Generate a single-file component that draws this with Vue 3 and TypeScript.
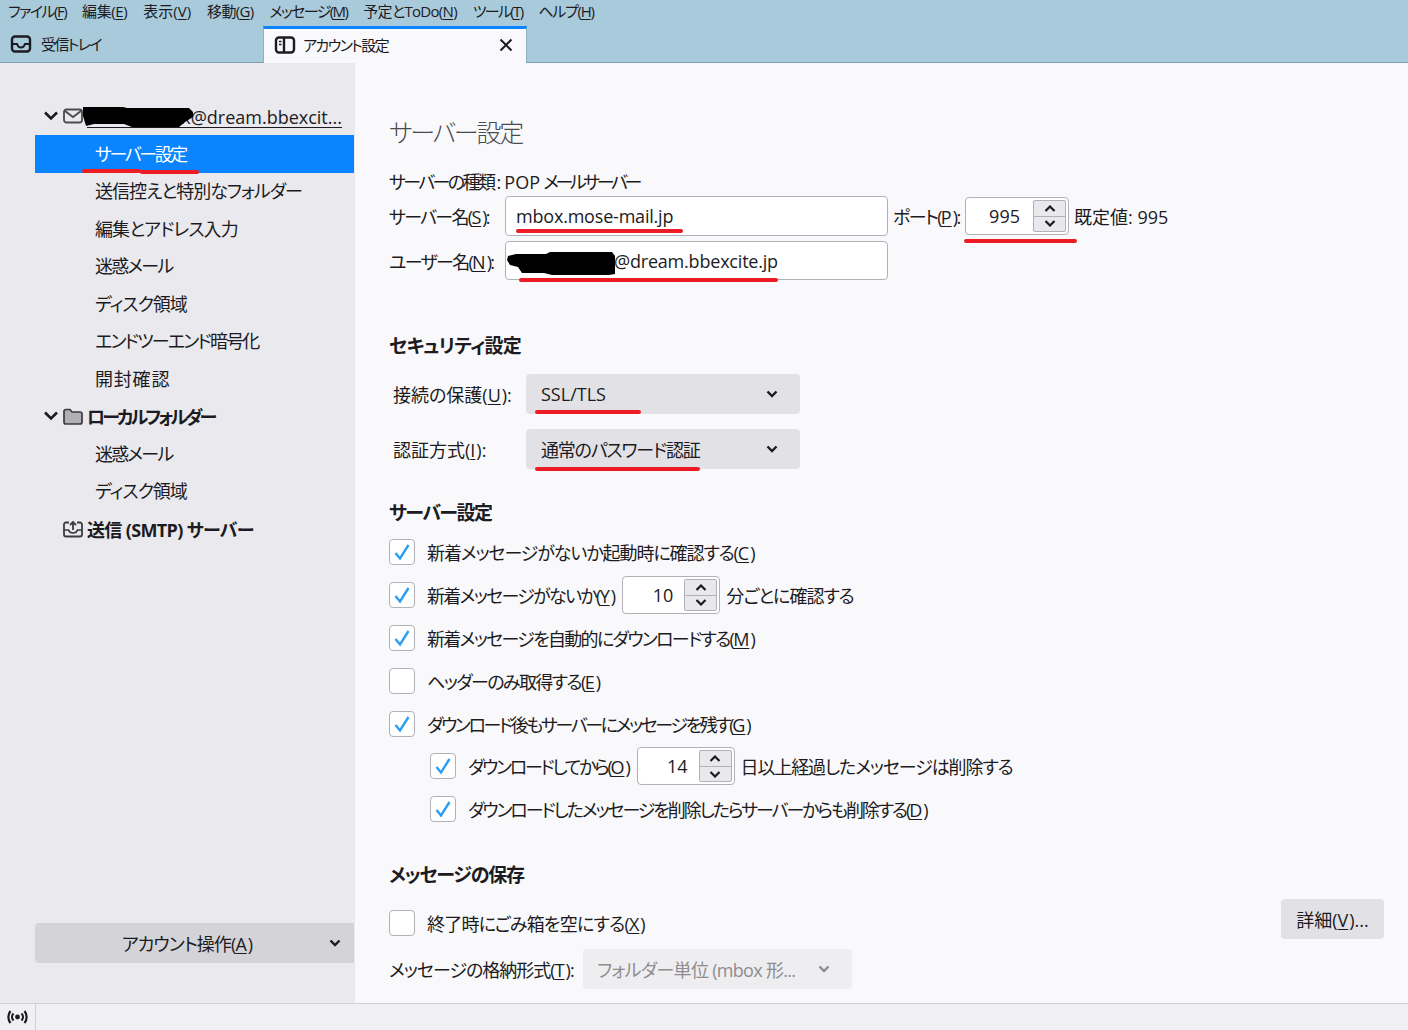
<script setup lang="ts">
interface MenuItem { label: string; key: string; ls: number }
interface SubItem { label: string; ls: number; active?: boolean }
interface CheckRow {
  before: string
  key: string
  checked: boolean
  ls: number
  indent?: boolean
  spin?: string
  after?: string
  afterLs?: number
}

// ls = letter spacing per label, the original UI font has narrower kana
const menus: MenuItem[] = [
  { label: 'ファイル', key: 'F', ls: -1.5 },
  { label: '編集', key: 'E', ls: -0.4 },
  { label: '表示', key: 'V', ls: 0 },
  { label: '移動', key: 'G', ls: -0.7 },
  { label: 'メッセージ', key: 'M', ls: -1.6 },
  { label: '予定とToDo', key: 'N', ls: -0.7 },
  { label: 'ツール', key: 'T', ls: -1.7 },
  { label: 'ヘルプ', key: 'H', ls: -1.3 },
]

const accountItems: SubItem[] = [
  { label: 'サーバー設定', ls: -2.4, active: true },
  { label: '送信控えと特別なフォルダー', ls: -1 },
  { label: '編集とアドレス入力', ls: -0.9 },
  { label: '迷惑メール', ls: -1.8 },
  { label: 'ディスク領域', ls: -1 },
  { label: 'エンドツーエンド暗号化', ls: -1.8 },
  { label: '開封確認', ls: 0.8 },
]
const localItems: SubItem[] = [
  { label: '迷惑メール', ls: -1.8 },
  { label: 'ディスク領域', ls: -1 },
]

const checks: CheckRow[] = [
  { before: '新着メッセージがないか起動時に確認する', key: 'C', checked: true, ls: -1.1 },
  { before: '新着メッセージがないか', key: 'Y', checked: true, ls: -1.7, spin: '10', after: '分ごとに確認する', afterLs: -1 },
  { before: '新着メッセージを自動的にダウンロードする', key: 'M', checked: true, ls: -1.7 },
  { before: 'ヘッダーのみ取得する', key: 'E', checked: false, ls: -1.6 },
  { before: 'ダウンロード後もサーバーにメッセージを残す', key: 'G', checked: true, ls: -2.4 },
  { before: 'ダウンロードしてから', key: 'O', checked: true, ls: -2.3, indent: true, spin: '14', after: '日以上経過したメッセージは削除する', afterLs: -1.1 },
  { before: 'ダウンロードしたメッセージを削除したらサーバーからも削除する', key: 'D', checked: true, ls: -2.1, indent: true },
]

// red marker lines drawn on the screenshot
const marks = [
  { x: 82, y: 169, w: 59 },
  { x: 140, y: 170, w: 59 },
  { x: 516, y: 229, w: 167 },
  { x: 519, y: 278, w: 259 },
  { x: 964, y: 239, w: 113 },
  { x: 535, y: 410, w: 106 },
  { x: 535, y: 467, w: 165 },
]
</script>

<template>
  <div class="app">
    <div class="menubar">
      <span v-for="m in menus" :key="m.key" class="menu" :style="{ letterSpacing: m.ls + 'px' }">{{ m.label }}(<u>{{ m.key }}</u>)</span>
    </div>
    <div class="tabbar">
      <div class="tab">
        <svg width="22" height="18" viewBox="0 0 22 18" fill="none" stroke="#1c1b22" stroke-width="2.4">
          <rect x="2" y="1.5" width="18" height="15" rx="3" />
          <path d="M2.5 9h4.5c.8 2.5 2 3.5 4 3.5s3.200-1 4-3.500h4.500" stroke-width="2" />
        </svg>
        <span class="tab-inbox">受信トレイ</span>
      </div>
      <div class="tab current">
        <svg width="22" height="18" viewBox="0 0 22 18" fill="none" stroke="#1c1b22" stroke-width="2.400">
          <rect x="2" y="1.500" width="18" height="15" rx="3" />
          <path d="M10 2v14" />
          <path d="M5 5.500h2.500M5 8.500h2.500" stroke-width="1.600" />
        </svg>
        <span class="tab-title">アカウント設定</span>
        <svg class="close" width="14" height="14" viewBox="0 0 14 14" stroke="#1c1b22" stroke-width="2">
          <path d="M1.500 1.500l11 11M12.500 1.500l-11 11" />
        </svg>
      </div>
    </div>

    <div class="body">
      <aside class="sidebar">
        <div class="tree">
          <div class="node">
            <svg class="twisty" width="16" height="10" viewBox="0 0 16 10" fill="none" stroke="#1c1b22" stroke-width="2.600">
              <path d="M2 1.500l6 6 6-6" />
            </svg>
            <svg class="node-icon" width="20" height="16" viewBox="0 0 20 16" fill="none" stroke="#4a4a4f" stroke-width="1.800">
              <rect x="1" y="1.500" width="18" height="13" rx="2.500" />
              <path d="M2 3l8 6 8-6" />
            </svg>
            <span class="account-name">xxxxxxxxxxx@dream.bbexcit...</span>
          </div>
          <div v-for="item in accountItems" :key="item.label" class="leaf" :class="{ active: item.active }" :style="{ letterSpacing: item.ls + 'px' }">{{ item.label }}</div>
          <div class="node">
            <svg class="twisty" width="16" height="10" viewBox="0 0 16 10" fill="none" stroke="#1c1b22" stroke-width="2.600">
              <path d="M2 1.500l6 6 6-6" />
            </svg>
            <svg class="node-icon" width="20" height="17" viewBox="0 0 20 17">
              <path d="M1 3.500a2 2 0 0 1 2-2h4l2 2.500h8a2 2 0 0 1 2 2v8a2 2 0 0 1-2 2H3a2 2 0 0 1-2-2z" fill="#b1b1b3" stroke="#3a3a3f" stroke-width="1.700" />
            </svg>
            <span class="node-label local">ローカルフォルダー</span>
          </div>
          <div v-for="item in localItems" :key="'l' + item.label" class="leaf" :style="{ letterSpacing: item.ls + 'px' }">{{ item.label }}</div>
          <div class="node">
            <span class="twisty-gap"></span>
            <svg class="node-icon" width="20" height="18" viewBox="0 0 20 18" fill="none" stroke="#3a3a3f" stroke-width="1.800">
              <path d="M6 2.500H3a2 2 0 0 0-2 2v10a2 2 0 0 0 2 2h14a2 2 0 0 0 2-2v-10a2 2 0 0 0-2-2h-3" />
              <path d="M1.500 10h4c.6 2 2 3 4.500 3s3.900-1 4.500-3h4" stroke-width="1.500" />
              <path d="M10 10V2.500M7 5l3-3 3 3" />
            </svg>
            <span class="node-label smtp">送信 (SMTP) サーバー</span>
          </div>
        </div>
        <button class="account-actions">
          <span class="aa-label">アカウント操作(<u>A</u>)</span>
          <svg width="12" height="8" viewBox="0 0 12 8" fill="none" stroke="#1c1b22" stroke-width="2.400">
            <path d="M1.500 1.500L6 6l4.500-4.500" />
          </svg>
        </button>
      </aside>

      <main class="content">
        <h1>サーバー設定</h1>
        <div class="type-line"><span class="tight first">サーバーの種類</span>: POP <span class="tight">メールサーバー</span></div>

        <div class="server-row">
          <label class="fld-label">サーバー名(<u>S</u>):</label>
          <div class="textbox">mbox.mose-mail.jp</div>
          <label class="port-label">ポート(<u>P</u>):</label>
          <div class="spin port">
            <span>995</span>
            <div class="spin-btns">
              <i><svg width="12" height="7" viewBox="0 0 12 7" fill="none" stroke="#1c1b22" stroke-width="2.200"><path d="M1.500 6L6 1.500 10.500 6" /></svg></i>
              <i><svg width="12" height="7" viewBox="0 0 12 7" fill="none" stroke="#1c1b22" stroke-width="2.200"><path d="M1.500 1L6 5.500 10.500 1" /></svg></i>
            </div>
          </div>
          <span class="default-val">既定値: 995</span>
        </div>
        <div class="server-row user">
          <label class="fld-label">ユーザー名(<u>N</u>):</label>
          <div class="textbox user-box">@dream.bbexcite.jp</div>
        </div>

        <h2 class="sec-security">セキュリティ設定</h2>
        <div class="sel-row">
          <label class="sel-label">接続の保護(<u>U</u>):</label>
          <div class="select">
            <span>SSL/TLS</span>
            <svg width="12" height="8" viewBox="0 0 12 8" fill="none" stroke="#1c1b22" stroke-width="2.400"><path d="M1.500 1.500L6 6l4.500-4.500" /></svg>
          </div>
        </div>
        <div class="sel-row second">
          <label class="sel-label">認証方式(<u>I</u>):</label>
          <div class="select">
            <span class="auth-val">通常のパスワード認証</span>
            <svg width="12" height="8" viewBox="0 0 12 8" fill="none" stroke="#1c1b22" stroke-width="2.400"><path d="M1.500 1.500L6 6l4.500-4.500" /></svg>
          </div>
        </div>

        <h2 class="sec-server">サーバー設定</h2>
        <div class="checks">
          <div v-for="c in checks" :key="c.key" class="check-row" :class="{ indent: c.indent }">
            <span class="box">
              <svg v-if="c.checked" width="18" height="18" viewBox="0 0 18 18" fill="none" stroke="#2a9df4" stroke-width="2.400">
                <path d="M2.500 10l4.500 5.500L15.500 2" />
              </svg>
            </span>
            <span class="check-text" :style="{ letterSpacing: c.ls + 'px' }">{{ c.before }}(<u>{{ c.key }}</u>)</span>
            <div v-if="c.spin" class="spin">
              <span>{{ c.spin }}</span>
              <div class="spin-btns">
                <i><svg width="12" height="7" viewBox="0 0 12 7" fill="none" stroke="#1c1b22" stroke-width="2.200"><path d="M1.500 6L6 1.500 10.500 6" /></svg></i>
                <i><svg width="12" height="7" viewBox="0 0 12 7" fill="none" stroke="#1c1b22" stroke-width="2.200"><path d="M1.500 1L6 5.500 10.500 1" /></svg></i>
              </div>
            </div>
            <span v-if="c.after" class="after" :style="{ letterSpacing: c.afterLs + 'px' }">{{ c.after }}</span>
          </div>
        </div>

        <h2 class="sec-store">メッセージの保存</h2>
        <div class="store-row">
          <span class="box"></span>
          <span class="check-text store-text">終了時にごみ箱を空にする(<u>X</u>)</span>
          <button class="detail">詳細(<u>V</u>)...</button>
        </div>
        <div class="format-row">
          <label>メッセージの格納形式(<u>T</u>):</label>
          <div class="select disabled">
            <span>フォルダー単位 (mbox 形...</span>
            <svg width="12" height="8" viewBox="0 0 12 8" fill="none" stroke="#8d8d90" stroke-width="2.400"><path d="M1.500 1.500L6 6l4.500-4.500" /></svg>
          </div>
        </div>
      </main>
    </div>

    <footer class="status">
      <div class="status-icon">
        <svg width="21" height="14" viewBox="0 0 21 14" fill="none" stroke="#1c1b22" stroke-width="2.200">
          <circle cx="10.500" cy="7" r="2.400" fill="#1c1b22" stroke="none" />
          <path d="M6.500 3.500a5 5 0 0 0 0 7M14.500 3.500a5 5 0 0 1 0 7M3.500 1a9.500 9.500 0 0 0 0 12M17.500 1a9.500 9.500 0 0 1 0 12" />
        </svg>
      </div>
    </footer>

    <!-- hand drawn marks from the original screenshot -->
    <svg class="scribble" style="left: 82px; top: 104px" width="112" height="24" viewBox="0 0 112 24">
      <path d="M1 3h40l4 1h62l4 4v5l-8 5-6 5H50l-8-3H12L4 22 1 12z" fill="#000" />
    </svg>
    <svg class="scribble" style="left: 506px; top: 250px" width="110" height="26" viewBox="0 0 110 26">
      <path d="M2 6l8-2h30l4-2h62l3 4v18l-6 1H46l-8-2H16l-4-6-8-2-3-5z" fill="#000" />
    </svg>
    <span v-for="(m, i) in marks" :key="i" class="mark" :style="{ left: m.x + 'px', top: m.y + 'px', width: m.w + 'px' }"></span>
  </div>
</template>

<style>
html, body { margin: 0; background: #f9f9fb; }
</style>

<style scoped>
.app {
  position: relative;
  width: 1408px;
  height: 1030px;
  display: flex;
  flex-direction: column;
  overflow: hidden;
  font-family: "Open Sans", "Noto Sans CJK JP", sans-serif;
  font-size: 18px;
  font-feature-settings: "palt";
  color: #1c1b22;
}
u {
  text-underline-offset: 2px;
  text-decoration-thickness: 1px;
  letter-spacing: 0;
  margin-right: 1px;
}
label { white-space: nowrap; }
.menubar {
  height: 26px;
  flex: none;
  background: #a8cadb;
  display: flex;
  align-items: center;
  padding: 0 0 5px 8px;
  box-sizing: border-box;
  gap: 16px;
  font-size: 15px;
}
.menubar u { letter-spacing: inherit; margin-right: 0; }
.tabbar {
  height: 37px;
  flex: none;
  background: #a8cadb;
  display: flex;
  box-shadow: inset 0 -1px 0 #7f9fb0;
}
.tab {
  width: 263px;
  display: flex;
  align-items: center;
  padding: 0 0 2px 10px;
  gap: 9px;
  box-sizing: border-box;
  font-size: 15px;
}
.tab-inbox { letter-spacing: -1.6px; }
.tab.current {
  width: 264px;
  padding: 0 0 3px 10px;
  gap: 7px;
  background: #f9f9fb;
  border-top: 3px solid #0a84ff;
  border-left: 1px solid #8fb0c2;
  border-right: 1px solid #8fb0c2;
}
.tab-title { flex: 1; letter-spacing: -1.6px; }
.close { margin-right: 13px; }
.body { flex: 1; display: flex; min-height: 0; }
.sidebar {
  width: 355px;
  flex: none;
  background: #e9e9ee;
  padding: 35px 1px 40px 35px;
  box-sizing: border-box;
  display: flex;
  flex-direction: column;
}
.tree { display: flex; flex-direction: column; margin-top: -0.5px; }
.node, .leaf {
  height: 37.5px;
  display: flex;
  align-items: center;
  box-sizing: border-box;
}
.node { padding-left: 8px; font-weight: 700; }
.twisty { flex: none; width: 16px; }
.twisty-gap { width: 16px; flex: none; }
.node-icon { margin-left: 4px; margin-right: 4px; flex: none; }
.account-name {
  font-weight: 500;
  text-decoration: underline;
  text-decoration-thickness: 1px;
  text-underline-offset: 3px;
  white-space: nowrap;
  padding-top: 1px;
}
.node-label { font-weight: 700; white-space: nowrap; }
.node-label.local { letter-spacing: -2.9px; }
.node-label.smtp { letter-spacing: -0.65px; }
.leaf { padding: 0 0 2px 60px; }
.leaf.active { background: #0a84ff; color: #fff; }
.account-actions {
  margin-top: auto;
  height: 40px;
  border: 0;
  border-radius: 4px 0 0 4px;
  background: #d3d3d8;
  font: inherit;
  font-feature-settings: inherit;
  color: inherit;
  display: flex;
  align-items: center;
  padding: 0 13px 0 0;
}
.aa-label { flex: 1; text-align: center; padding-left: 10px; letter-spacing: -0.9px; }
.content {
  flex: 1;
  padding: 52px 24px 0 34px;
  box-sizing: border-box;
  background: #f9f9fb;
  min-width: 0;
}
h1 {
  margin: 0;
  font-size: 25px;
  line-height: 34px;
  font-weight: 300;
  color: #4a4a4f;
  letter-spacing: -2.2px;
}
h2 { margin: 0; font-size: 19px; line-height: 26px; font-weight: 700; }
.type-line { margin-top: 21px; line-height: 24px; word-spacing: -1.5px; }
.tight { letter-spacing: -3.4px; }
.tight.first { letter-spacing: -2.6px; margin-right: 3px; }
.server-row {
  display: flex;
  align-items: center;
  height: 40px;
  margin-top: 2px;
}
.server-row.user { margin-top: 5px; height: 39px; }
.fld-label { width: 116px; flex: none; letter-spacing: -1.7px; }
.textbox {
  width: 383px;
  height: 100%;
  box-sizing: border-box;
  border: 1px solid #b1b1b9;
  border-radius: 4px;
  background: #fff;
  padding-left: 10px;
  display: flex;
  align-items: center;
  letter-spacing: -0.2px;
}
.user-box { padding-left: 108px; }
.port-label { margin-left: 5px; width: 72px; flex: none; letter-spacing: -1.6px; }
.spin {
  position: relative;
  width: 98px;
  height: 38px;
  flex: none;
  box-sizing: border-box;
  border: 1px solid #b1b1b9;
  border-radius: 4px;
  background: #fff;
  display: flex;
  align-items: center;
  justify-content: flex-end;
  padding-right: 46px;
}
.spin.port { width: 104px; padding-right: 48px; }
.spin-btns {
  position: absolute;
  right: 2px;
  top: 2px;
  bottom: 2px;
  width: 33px;
  box-sizing: border-box;
  border: 1px solid #b1b1b9;
  border-radius: 2px;
  background: #e9e9ed;
  display: flex;
  flex-direction: column;
}
.spin-btns i {
  flex: 1;
  display: flex;
  align-items: center;
  justify-content: center;
}
.spin-btns i + i { border-top: 1px solid #b1b1b9; }
.default-val { margin-left: 5px; }
.sec-security { margin-top: 53px; letter-spacing: -0.75px; }
.sel-row {
  display: flex;
  align-items: center;
  height: 40px;
  margin-top: 15px;
  padding-left: 4px;
}
.sel-label { width: 133px; flex: none; }
.select {
  width: 274px;
  height: 40px;
  box-sizing: border-box;
  border-radius: 4px;
  background: #e2e2e6;
  display: flex;
  align-items: center;
  justify-content: space-between;
  padding: 0 22px 0 15px;
}
.auth-val { letter-spacing: -1.2px; }
.sec-server { margin-top: 31px; letter-spacing: -1.5px; }
.checks { margin-top: 5px; }
.check-row {
  height: 42.8px;
  display: flex;
  align-items: center;
}
.check-row.indent { padding-left: 41px; }
.box {
  width: 26px;
  height: 26px;
  flex: none;
  box-sizing: border-box;
  border: 1px solid #b1b1b9;
  border-radius: 4px;
  background: #fff;
  display: flex;
  align-items: center;
  justify-content: center;
}
.check-text { margin-left: 12px; white-space: nowrap; }
.check-row .spin { margin-left: 8px; }
.after { margin-left: 6px; white-space: nowrap; }
.sec-store { margin-top: 31px; letter-spacing: -1.2px; }
.store-row {
  display: flex;
  align-items: center;
  height: 40px;
  margin-top: 15px;
}
.store-text { letter-spacing: -0.8px; }
.detail {
  margin-left: auto;
  width: 103px;
  height: 40px;
  margin-top: -8px;
  border: 0;
  border-radius: 4px;
  background: #e2e2e6;
  font: inherit;
  font-feature-settings: inherit;
  color: inherit;
  padding: 0;
}
.format-row {
  display: flex;
  align-items: center;
  height: 40px;
  margin-top: 6px;
}
.format-row label { width: 194px; flex: none; letter-spacing: -1px; }
.select.disabled {
  width: 269px;
  color: #8d8d90;
  background: #eeeef0;
  padding: 0 22px 0 14px;
  letter-spacing: -0.7px;
}
.status {
  height: 27px;
  flex: none;
  box-sizing: border-box;
  background: #f0f0f4;
  border-top: 1px solid #d0d0d5;
  display: flex;
}
.status-icon {
  width: 36px;
  box-sizing: border-box;
  border-right: 1px solid #d0d0d5;
  display: flex;
  align-items: center;
  justify-content: center;
}
.scribble { position: absolute; }
.mark {
  position: absolute;
  height: 4px;
  background: #ed1c24;
  border-radius: 2px;
}
</style>
